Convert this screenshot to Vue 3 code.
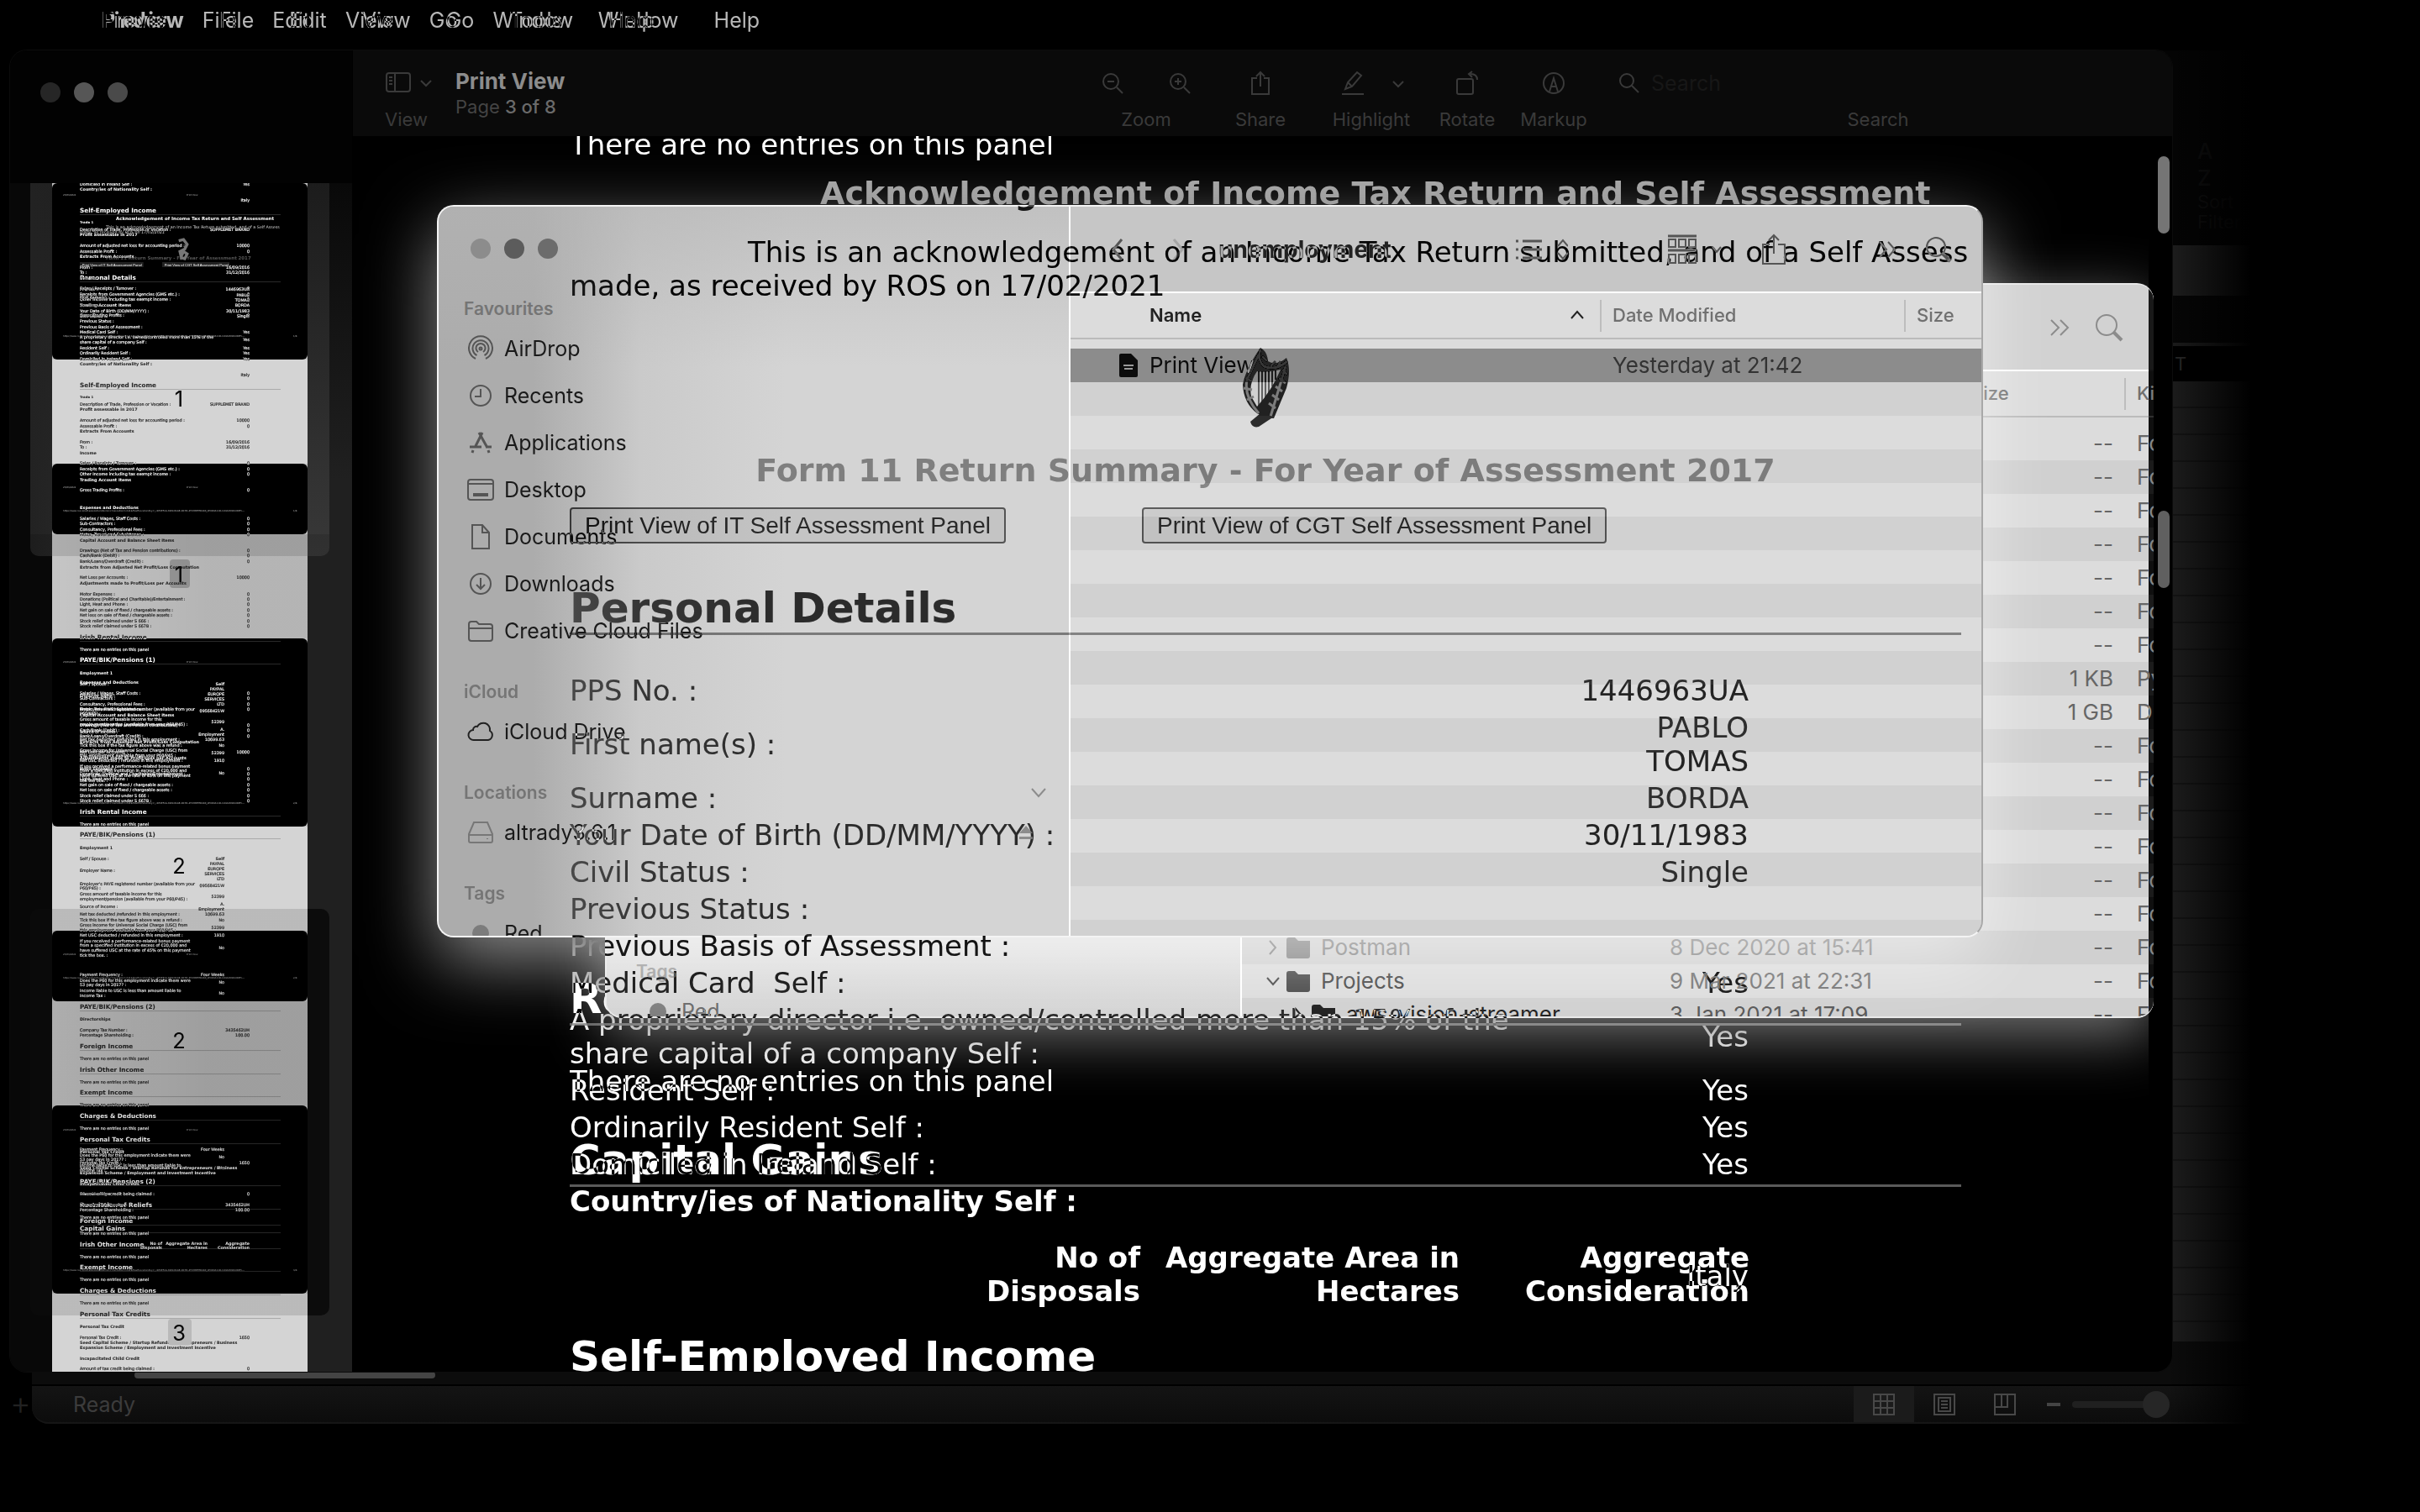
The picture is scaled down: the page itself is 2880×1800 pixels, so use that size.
<script setup>
const menuBack = ['Finder', 'File', 'Edit', 'View', 'Go', 'Window', 'Help']
const menuFront = ['Preview', 'File', 'Edit', 'View', 'Go', 'Tools', 'Window', 'Help']

const favourites = [
  { name: 'AirDrop', icon: 'airdrop' },
  { name: 'Recents', icon: 'clock' },
  { name: 'Applications', icon: 'apps' },
  { name: 'Desktop', icon: 'desktop' },
  { name: 'Documents', icon: 'doc' },
  { name: 'Downloads', icon: 'down' },
  { name: 'Creative Cloud Files', icon: 'folder' },
]

const dash = (n) => Array.from({ length: n }, () => ({ size: '--', kind: 'Folder' }))
const files = [
  ...dash(7),
  { size: '1 KB', kind: 'Python' },
  { size: '1 GB', kind: 'Disk' },
  ...dash(6),
  { name: 'Postman', date: '8 Dec 2020 at 15:41', size: '--', kind: 'Folder', tone: 'faint' },
  { name: 'Projects', date: '9 Mar 2021 at 22:31', size: '--', kind: 'Folder', tone: 'mid', open: true },
  { name: 'aws-vision-streamer', date: '3 Jan 2021 at 17:09', size: '--', kind: 'Folder', tone: 'dark' },
]

const details = [
  ['PPS No. :', '1446963UA'],
  ['First name(s) :', 'PABLO\nTOMAS'],
  ['Surname :', 'BORDA'],
  ['Your Date of Birth (DD/MM/YYYY) :', '30/11/1983'],
  ['Civil Status :', 'Single'],
  ['Previous Status :', ''],
  ['Previous Basis of Assessment :', ''],
  ['Medical Card\u00a0 Self :', 'Yes'],
  ['A proprietary director i.e. owned/controlled more than 15% of the share capital of a company Self :', 'Yes'],
  ['Resident Self :', 'Yes'],
  ['Ordinarily Resident Self :', 'Yes'],
  ['Domiciled in Ireland Self :', 'Yes'],
]

/* Miniature pages: y | style | label | value | value column (right edge) */
const intro = `
331|h|Personal Details|
344||PPS No. :|1446963UA
351|||PABLO
354||First name(s) :|
357|||TOMAS
363||Surname :|BORDA
370||Your Date of Birth (DD/MM/YYYY) :|30/11/1983
376||Civil Status :|Single
382||Previous Status :|
389||Previous Basis of Assessment :|
395||Medical Card  Self :|Yes
401||A proprietary director i.e. owned/controlled more than 15% of the|
404|||Yes
407||share capital of a company Self :|
414||Resident Self :|Yes
420||Ordinarily Resident Self :|Yes`
const income = `
427||Domiciled in Ireland Self :|Yes
433|b|Country/ies of Nationality Self :|
446|||Italy
459|h|Self-Employed Income|
472|s|Trade 1|
481||Description of Trade, Profession or Vocation :|SUPPLEMET BRAND
487|b|Profit assessable in 2017|
500||Amount of adjusted net loss for accounting period :|10000
507||Assessable Profit :|0
513|b|Extracts From Accounts|
526||From :|16/09/2016
532||To :|31/12/2016
539|b|Income|
551||Sales / Receipts / Turnover :|0
558||Receipts from Government Agencies (GMS etc.) :|0
564||Other Income including tax exempt income :|0
571|b|Trading Account Items|
583||Gross Trading Profits :|0`
const expenses = `
604|b|Expenses and Deductions|
617||Salaries / Wages, Staff Costs :|0
623||Sub-Contractors :|0
630||Consultancy, Professional Fees :|0
636||Motor, Travel and Subsistence :|0
643|b|Capital Account and Balance Sheet Items|
655||Drawings (Net of Tax and Pension contributions) :|0
661||Cash/Bank (Debit) :|0
668||Bank/Loans/Overdraft (Credit) :|0
675|b|Extracts from Adjusted Net Profit/Loss Computation|
687||Net Loss per Accounts :|10000
694|b|Adjustments made to Profit/Loss per Accounts|
707||Motor Expenses :|0
713||Donations (Political and Charitable)/Entertainment :|0
719||Light, Heat and Phone :|0
726||Net gain on sale of fixed / chargeable assets :|0
732||Net loss on sale of fixed / chargeable assets :|0
739||Stock relief claimed under S 666 :|0
745||Stock relief claimed under S 667B :|0
759|h|Irish Rental Income|
773||There are no entries on this panel|`
const paye = `
994|h|PAYE/BIK/Pensions (1)|
1009|b|Employment 1|
1022||Self / Spouse :|
1022|b||Self|205
1028|||PAYPAL|205
1034|||EUROPE|205
1036||Employer Name :|
1040|||SERVICES|205
1046|||LTD|205
1052||Employer's PAYE registered number (available from your|
1054|||09568421W|205
1057||P60/P45) :|
1064||Gross amount of taxable income for this|
1067|||52399|205
1070||employment/pension (available from your P60/P45) :|
1076|||A.|205
1079||Source of income :|
1082|||Employment|205
1088||Net tax deducted /refunded in this employment :|10699.63|205
1095||Tick this box if the tax figure above was a refund :|No|205
1101||Gross income for Universal Social Charge (USC) from|
1104|||52399|205
1107||this employment available from your P60/P45 :|
1113||Net USC deducted / refunded in this employment :|1910|205
1120||If you received a performance-related bonus payment|
1125||from a specified institution in excess of €20,000 and|
1128|||No|205
1131||have suffered USC at the rate of 45% on this payment|
1137||tick the box. :|`
const credits = `
1160||Payment Frequency :|Four Weeks|205
1167||Does the P60 for this employment indicate there were|
1169|||No|205
1172||53 pay days in 2017? :|
1179||Income liable to USC is less than amount liable to|
1182|||No|205
1185||Income Tax :|
1199|h|PAYE/BIK/Pensions (2)|
1213|b|Directorships|
1226||Company Tax Number :|3435462UH
1232||Percentage Shareholding :|100.00
1246|h|Foreign Income|
1260||There are no entries on this panel|
1274|h|Irish Other Income|
1288||There are no entries on this panel|
1301|h|Exempt Income|
1315||There are no entries on this panel|
1329|h|Charges & Deductions|
1343||There are no entries on this panel|
1357|h|Personal Tax Credits|
1371|b|Personal Tax Credit|
1384||Personal Tax Credit :|1650
1390|b|Seed Capital Scheme / Startup Refunds for Entrepreneurs / Business|
1396|b|Expansion Scheme / Employment and Investment Incentive|
1409|b|Incapacitated Child Credit|
1421||Amount of tax credit being claimed :|0
1435|h|Restriction of Reliefs|
1449||There are no entries on this panel|
1463|h|Capital Gains|
1480|b||No of|131
1480|b||Aggregate Area in|185
1480|b||Aggregate|
1485|b||Disposals|131
1485|b||Hectares|185
1485|b||Consideration|`

const U = 7
const parse = (src, shift) =>
  src.trim().split('\n').map((l) => {
    const [y, s, label, value, right] = l.split('|')
    return { y: (Number(y) + shift - 216) * U, s: s || 'n', label, value, right: Number(right || 235) * U }
  }).filter((l) => l.y > -14 && l.y < 9900)
const layers = [
  [...parse(intro, 0), ...parse(income, 0), ...parse(expenses, 0), ...parse(paye, 0), ...parse(credits, 0)],
  [...parse(income, -208), ...parse(paye, -208), ...parse(expenses, 208), ...parse(credits, 208)],
]
const headers = [232, 580, 788, 1136, 1345].map((y) => (y - 217) * U)
const footers = [[400, '1/8'], [608, '1/8'], [956, '2/8'], [1164, '2/8'], [1512, '3/8']].map(([y, n]) => ({ y: (y - 217) * U, n }))
const sheets = [
  ['blk', 210], ['pale', 124], ['blk', 84], ['pale grey', 124], ['blk', 224],
  ['pale', 124], ['blk', 84], ['pale grey', 124], ['blk', 224], ['pale', 93],
]
</script>

<template>
  <div class="screen">
    <header class="menubar">
      <nav class="menu" aria-label="Finder menu">
        <a v-for="(m, i) in menuBack" :key="i" href="#" :class="{ app: i === 0 }">{{ m }}</a>
      </nav>
      <nav class="menu over" aria-label="Preview menu">
        <a v-for="(m, i) in menuFront" :key="i" href="#" :class="{ app: i === 0 }">{{ m }}</a>
      </nav>
    </header>

    <section class="sheet" aria-label="Spreadsheet">
      <div class="ribbon"><b>A</b><b>Z</b><span>Sort</span><span>Filter</span></div>
      <div class="formula"></div>
      <div class="colhead">T</div>
      <div class="cells"></div>
      <div class="tabs"><span class="hthumb"></span></div>
      <footer class="status">
        <span class="ready">Ready</span>
        <div class="views">
          <button class="on" aria-label="Normal view"><svg width="28" height="28" viewBox="0 0 28 28"><path d="M2 2h24v24H2zM2 10h24M2 18h24M10 2v24M18 2v24" /></svg></button>
          <button aria-label="Page layout"><svg width="28" height="28" viewBox="0 0 28 28"><path d="M2 2h24v24H2zM7 6h14v16H7zM10 10h8M10 14h8M10 18h8" /></svg></button>
          <button aria-label="Page break"><svg width="28" height="28" viewBox="0 0 28 28"><path d="M2 2h24v24H2zM2 17h15V2M10 2v15" /></svg></button>
        </div>
        <i class="minus"></i><i class="track"><i class="knob"></i></i>
      </footer>
    </section>
    <span class="plus">+</span>

    <main class="preview">
      <aside class="side">
        <div class="lights dim"><i></i><i></i><i></i></div>
        <div class="thumbs">
          <div class="sel"></div>
          <div class="strip">
            <div v-for="(s, i) in sheets" :key="i" :class="s[0]" :style="{ flexGrow: s[1] }"></div>
          </div>
          <svg class="mini" viewBox="0 0 2128 9905" preserveAspectRatio="xMidYMin slice">
            <g v-for="(lines, k) in layers" :key="k" class="pass">
              <template v-for="(l, i) in lines" :key="i">
                <text v-if="l.label" :class="l.s" x="231" :y="l.y">{{ l.label }}</text>
                <text v-if="l.value" :class="l.s" :x="l.right" :y="l.y" text-anchor="end">{{ l.value }}</text>
                <path v-if="l.s === 'h'" class="rule" :d="`M231 ${l.y + 18}H1904`" />
              </template>
            </g>
            <g class="pass">
              <text class="ack" x="532" y="308">Acknowledgement of Income Tax Return and Self Assessment</text>
              <text class="n soft" x="448" y="378">This is an acknowledgement of an Income Tax Return submitted, and of a Self Assess</text>
              <text class="n soft" x="231" y="420">made, as received by ROS on 17/02/2021</text>
              <text class="ack low" x="448" y="637">Form 11 Return Summary - For Year of Assessment 2017</text>
              <rect class="chip" x="231" y="658" width="530" height="42" /><rect class="chip" x="917" y="658" width="560" height="42" />
              <text class="btn" x="250" y="690">Print View of IT Self Assessment Panel</text>
              <text class="btn" x="936" y="690">Print View of CGT Self Assessment Panel</text>
              <path class="tiny" d="M1055 480l40-10 30 40-20 40-40 20 10 40 20-40 30 20-20 40-30-10" />
              <text v-for="y in headers" :key="'d' + y" class="t" x="91" :y="y">25/03/2021</text>
              <text v-for="y in headers" :key="'p' + y" class="t" x="1120" :y="y">Print View</text>
              <template v-for="f in footers" :key="f.y">
                <text class="t" x="91" :y="f.y">https://www.ros.ie/self-assessment/service?execution=e1s1&amp;flowExecutionKey=_c4E9EF2A-3909-B2AB-DC7D-4F25BBFED480_kE9CDA11D-11DA-B09D-DDE5---</text>
                <text class="t" x="2040" :y="f.y" text-anchor="end">{{ f.n }}</text>
              </template>
            </g>
            <rect class="badge" x="980" y="3136" width="168" height="238" rx="28" />
            <rect class="badge light" x="966" y="9464" width="196" height="220" rx="28" />
            <g class="nums" text-anchor="middle">
              <text x="1057" y="1860">1</text><text x="1057" y="3325">1</text><text x="1057" y="5755">2</text>
              <text x="1057" y="7209">2</text><text x="1057" y="9645">3</text>
            </g>
          </svg>
          <div class="strip wash">
            <div v-for="(s, i) in sheets" :key="i" :class="s[0]" :style="{ flexGrow: s[1] }"></div>
          </div>
          <div class="shade first"></div>
          <div class="shade second"></div>
        </div>
      </aside>

      <div class="body">
        <div class="toolbar">
          <div class="viewtool">
            <div class="ico"><svg width="60" height="28" viewBox="0 0 60 28"><rect x="2" y="2" width="28" height="22" rx="3" /><path d="M12 2v22M5 7h4M5 11h4M5 15h4M43 11l6 6 6-6" /></svg></div>
            <span>View</span>
          </div>
          <div class="title"><b>Print View</b><small>Page <em>3 of 8</em></small></div>
          <div class="tool zoom"><div class="ico">
            <svg width="28" height="28" viewBox="0 0 28 28"><circle cx="12" cy="12" r="9" /><path d="M19 19l7 7M8 12h8" /></svg>
            <svg width="28" height="28" viewBox="0 0 28 28"><circle cx="12" cy="12" r="9" /><path d="M19 19l7 7M8 12h8M12 8v8" /></svg></div><span>Zoom</span></div>
          <div class="tool share"><div class="ico"><svg width="28" height="30" viewBox="0 0 28 30"><path d="M10 9H4v19h20V9h-6M14 19V2M9 7l5-5 5 5" /></svg></div><span>Share</span></div>
          <div class="tool high"><div class="ico"><svg width="90" height="30" viewBox="0 0 90 30"><path d="M10 28h26M14 22l3-8L28 2l5 4-11 13-8 3zM17 14l5 5M71 13l6 6 6-6" /></svg></div><span>Highlight</span></div>
          <div class="tool rot"><div class="ico"><svg width="28" height="30" viewBox="0 0 28 30"><rect x="2" y="10" width="19" height="18" rx="2" /><path d="M26 11c0-5-3-7-8-7M20 1l-4 3 4 4" /></svg></div><span>Rotate</span></div>
          <div class="tool mark"><div class="ico"><svg width="28" height="28" viewBox="0 0 28 28"><circle cx="14" cy="14" r="12" /><path d="M9 24l5-16 5 16M11 18h6" /></svg></div><span>Markup</span></div>
          <div class="tool find"><label class="ico"><svg width="28" height="28" viewBox="0 0 28 28"><circle cx="11" cy="11" r="8" /><path d="M17 17l8 8" /></svg><input type="text" placeholder="Search" aria-label="Search" /></label><span>Search</span></div>
        </div>

        <div class="doc">
          <article class="page under">
            <p class="cut">There are no entries on this panel</p>
            <h2 class="reliefs">Restriction of Reliefs</h2>
            <p class="none">There are no entries on this panel</p>
            <h2 class="gains">Capital Gains</h2>
            <div class="thead"><b>No of Disposals</b><b>Aggregate Area in Hectares</b><b>Aggregate Consideration</b></div>
          </article>

          <div class="glow"><div></div></div>

          <section class="finder back">
            <div class="fside">
              <div class="grp">Tags</div>
              <div class="row"><i class="dot"></i>Red</div>
            </div>
            <div class="flist">
              <div class="fbar">
                <svg width="28" height="24" viewBox="0 0 28 24"><path d="M4 3l9 9-9 9M15 3l9 9-9 9" /></svg>
                <svg width="34" height="34" viewBox="0 0 34 34"><circle cx="14" cy="14" r="12" /><path d="M22 22l10 10" stroke-width="4" /></svg>
              </div>
              <table>
                <colgroup><col class="c1" /><col class="c2" /><col class="c3" /><col /></colgroup>
                <thead><tr><th></th><th></th><th>Size</th><th class="kd">Kind</th></tr></thead>
                <tbody>
                  <tr v-for="(f, i) in files" :key="i" :class="f.tone">
                    <td class="nm"><div v-if="f.name" :class="{ deep: f.tone === 'dark' }">
                      <svg width="18" height="20" viewBox="0 0 18 20"><path :d="f.open ? 'M2 6l7 8 7-8' : 'M5 2l7 8-7 8'" /></svg>
                      <svg class="fold" width="28" height="26" viewBox="0 0 28 26"><path d="M0 4q0-3 3-3h7l4 4h14v18q0 3-3 3H3q-3 0-3-3z" /></svg>{{ f.name }}
                    </div></td>
                    <td>{{ f.date }}</td><td class="sz">{{ f.size }}</td><td class="kd">{{ f.kind }}</td>
                  </tr>
                </tbody>
              </table>
            </div>
            <div class="edge"></div>
          </section>

          <section class="finder front">
            <div class="fside">
              <div class="lights"><i></i><i></i><i></i></div>
              <div class="grp">Favourites</div>
              <div v-for="f in favourites" :key="f.name" class="row">
                <svg width="32" height="32" viewBox="0 0 32 32">
                  <g v-if="f.icon === 'airdrop'"><path d="M10 28a14 14 0 1 1 12 0M11.500 24a9.500 9.500 0 1 1 9 0M13 20a5.500 5.500 0 1 1 6 0" /><circle cx="16" cy="16" r="1.500" /></g>
                  <g v-else-if="f.icon === 'clock'"><circle cx="16" cy="16" r="12" /><path d="M16 8v9h-7" /></g>
                  <path v-else-if="f.icon === 'apps'" stroke-width="3" d="M18 4L10 20M14 4l10 18M3 21h14M22 21h7M7 25l-1 3M25 25l1 3" />
                  <g v-else-if="f.icon === 'desktop'"><rect x="1" y="4" width="30" height="24" rx="3" /><path d="M1 9h30" /><path d="M7 22h18" stroke-width="4" /></g>
                  <path v-else-if="f.icon === 'doc'" d="M6 2h12l8 9v19H6zM18 2v9h8" />
                  <g v-else-if="f.icon === 'down'"><circle cx="16" cy="16" r="12" /><path d="M16 9v13M11 17l5 5 5-5" /></g>
                  <path v-else d="M2 8q0-3 3-3h6l3 3h13q3 0 3 3v14q0 3-3 3H5q-3 0-3-3zM2 13h28" />
                </svg>{{ f.name }}
              </div>
              <div class="grp">iCloud</div>
              <div class="row"><svg class="strong" width="32" height="32" viewBox="0 0 32 32"><path d="M8 26a6 6 0 0 1-1-12 4 4 0 0 1 5-4 8 8 0 0 1 15 5 6 6 0 0 1-2 11z" /></svg>iCloud Drive</div>
              <div class="grp">Locations<svg class="tail" width="20" height="14" viewBox="0 0 20 14"><path d="M2 2l8 9 8-9" /></svg></div>
              <div class="row"><svg class="weak" width="32" height="32" viewBox="0 0 32 32"><path d="M8 4h16l6 14v8q0 2-2 2H4q-2 0-2-2v-8zM2 19h28M24 23v1" /></svg>altrady3.6.1<svg class="tail eject" width="18" height="20" viewBox="0 0 18 20"><path d="M9 2l8 9H1zM1 15h16v3H1z" /></svg></div>
              <div class="grp">Tags</div>
              <div class="row"><i class="dot"></i>Red</div>
            </div>
            <div class="flist">
              <div class="fbar">
                <svg width="16" height="28" viewBox="0 0 16 28"><path d="M13 2L3 14l10 12" stroke-width="3" /></svg>
                <svg class="off" width="16" height="28" viewBox="0 0 16 28"><path d="M3 2l10 12L3 26" stroke-width="3" /></svg>
                <b>unemployment</b>
                <svg width="64" height="30" viewBox="0 0 64 30"><path d="M2 5h3M10 5h23M2 15h3M10 15h23M2 25h3M10 25h23" stroke-width="3" /><path d="M52 11l6-7 6 7M52 19l6 7 6-7" /></svg>
                <svg width="68" height="38" viewBox="0 0 68 38"><path d="M1 3h34M1 20h34" stroke-width="3" /><path d="M2 7h8v9H2zM14 7h8v9h-8zM26 7h8v9h-8zM2 25h8v10H2zM14 25h8v10h-8zM26 25h8v10h-8zM54 16l5 6 5-6" /></svg>
                <svg width="30" height="38" viewBox="0 0 30 38"><path d="M10 13H2v23h26V13h-8M15 24V2M9 8l6-6 6 6" /></svg>
                <svg width="24" height="22" viewBox="0 0 24 22"><path d="M3 2l8 9-8 9M13 2l8 9-8 9" /></svg>
                <svg width="34" height="34" viewBox="0 0 34 34"><circle cx="14" cy="14" r="11" /><path d="M22 22l9 9" stroke-width="4" /></svg>
              </div>
              <table>
                <colgroup><col class="c1" /><col class="c2" /><col /></colgroup>
                <thead><tr><th class="nm"><div>Name<svg width="18" height="12" viewBox="0 0 18 12"><path d="M2 10l7-8 7 8" /></svg></div></th><th class="ln">Date Modified</th><th class="ln">Size</th></tr></thead>
                <tbody><tr><td class="nm"><div><svg width="22" height="28" viewBox="0 0 22 28"><path class="ink" d="M0 2q0-2 2-2h12l8 8v18q0 2-2 2H2q-2 0-2-2z" /><path class="lite" d="M5 14h12M6 18h10" /></svg>Print View</div></td><td>Yesterday at 21:42</td><td></td></tr></tbody>
              </table>
              <div class="stripes"></div>
            </div>
          </section>

          <article class="page over">
            <h1>Acknowledgement of Income Tax Return and Self Assessment</h1>
            <p class="intro">This is an acknowledgement of an Income Tax Return submitted, and of a Self Assess<br />made, as received by ROS on 17/02/2021</p>
            <svg class="harp" width="60" height="100" viewBox="0 0 60 100">
              <path class="wire" d="M22 30v44M26 28v42M30 30v34M34 30v28M38 30v20M42 30v12" />
              <path class="wood" d="M24 4q8 4 9 16 10 6 22-4 6 14 0 36L40 88q-10 0-20-6Q4 70 3 48 6 30 24 4zM20 32Q10 46 13 62l7 12q18-20 28-44-16 4-28 2z" />
              <path class="vein" d="M24 6q-4 12 4 20 14 6 28-6M22 12L8 42q-4 20 14 40M26 14l6 6M54 26L36 86M50 30l6 6M46 40l8 6M42 50l8 6M38 60l8 6M34 70l8 6M6 40l8 4M4 52l10 2M8 66l8-4M36 26l6-6M44 28l4-8" />
              <path class="wood" d="M12 92l12-10 16 4-18 12q-8 2-10-6z" />
            </svg>
            <h3>Form 11 Return Summary - For Year of Assessment 2017</h3>
            <div class="buttons"><button>Print View of IT Self Assessment Panel</button><button>Print View of CGT Self Assessment Panel</button></div>
            <h2>Personal Details</h2>
            <table class="details">
              <colgroup><col /><col class="val" /></colgroup>
              <tbody>
                <tr v-for="(d, i) in details" :key="i"><th scope="row">{{ d[0] }}</th><td>{{ d[1] }}</td></tr>
                <tr><th scope="row" class="bold" colspan="2">Country/ies of Nationality Self :</th></tr>
                <tr class="italy"><td colspan="2">Italy</td></tr>
              </tbody>
            </table>
            <h2 class="self">Self-Employed Income</h2>
          </article>

          <i class="scroll upper"></i><i class="scroll lower"></i>
        </div>
      </div>
    </main>
  </div>
</template>

<style>
body { margin: 0; background: #000; }
</style>

<style scoped>
* { box-sizing: border-box; }
.screen { position: relative; min-height: 100vh; overflow: hidden; background: #000; font-family: Inter, "Noto Sans", sans-serif; font-size: 24px; isolation: isolate; }
svg { fill: none; stroke: currentColor; stroke-width: 2; flex: none; }
button { border: 0; background: none; color: inherit; padding: 0; font: inherit; }

.menubar { display: grid; height: 48px; padding-left: 121px; isolation: isolate; }
.menu { grid-area: 1 / 1; display: flex; align-items: center; gap: 42px; font-size: 25px; }
.menu a { color: #b8b8b8; text-decoration: none; }
.menu .app { font-weight: 700; }
.over { mix-blend-mode: difference; }

.sheet { position: absolute; inset: 60px 190px 105px 38px; display: flex; flex-direction: column; color: #333; background: #0b0b0b; border-radius: 0 0 20px 20px; }
.sheet::after { content: ""; position: absolute; inset: 0 0 0 auto; width: 110px; background: linear-gradient(90deg, transparent, #000 90%); }
.ribbon { height: 232px; padding: 104px 0 0 2577px; display: flex; flex-direction: column; color: #101010; background: #040404; font-size: 22px; overflow: hidden; }
.ribbon b { font-size: 26px; font-weight: 500; line-height: 32px; }
.ribbon span { line-height: 24px; }
.formula { height: 120px; background: linear-gradient(#1e1e1e 60px, #060606 60px, #060606 116px, #1c1c1c 116px); }
.colhead { height: 42px; padding-left: 2550px; background: #000; color: #2a2a2a; font-size: 22px; line-height: 42px; }
.cells { flex: 1; background: repeating-linear-gradient(#1d1d1d 0 30px, #141414 30px 32px); }
.tabs { height: 53px; background: #0c0c0c; border-bottom: 2px solid #000; }
.hthumb { display: block; width: 358px; height: 8px; margin: 36px 0 0 122px; border-radius: 4px; background: #444; }
.status { height: 45px; display: flex; align-items: center; padding-right: 122px; background: linear-gradient(#141414, #0c0c0c); border-bottom: 2px solid #161616; border-radius: 0 0 20px 20px; }
.ready { flex: 1; padding-left: 49px; font-size: 25px; color: #3c3c3c; }
.views { display: flex; align-self: stretch; color: #484848; }
.views button { width: 72px; display: grid; place-items: center; }
.views .on { background: #1b1b1b; }
.minus { width: 16px; height: 4px; margin: 0 14px; background: #444; }
.track { position: relative; width: 102px; height: 8px; border-radius: 4px; background: #202020; }
.knob { position: absolute; right: -14px; top: -12px; width: 32px; height: 32px; border-radius: 50%; background: #262626; }
.plus { position: absolute; left: 12px; bottom: 108px; font-size: 38px; line-height: 44px; color: #222; font-weight: 300; }

.preview { position: absolute; inset: 60px 295px 167px 12px; display: flex; border-radius: 20px; overflow: hidden; background: #000; isolation: isolate; box-shadow: 0 0 0 1px #0c0c0c; }
.side { width: 408px; display: flex; flex-direction: column; background: linear-gradient(90deg, #060606, #0a0a0a 90%); border-right: 1px solid #000; }
.lights { display: flex; gap: 16px; }
.lights i { width: 24px; height: 24px; border-radius: 50%; background: #6c6c6c; }
.lights i:first-child { background: #8c8c8c; }
.lights i:nth-child(2) { background: #5c5c5c; }
.dim { padding: 38px 0 96px 36px; background: #020202; }
.dim i { background: #4a4a4a; }
.dim i:first-child { background: #262626; }
.dim i:nth-child(2) { background: #565656; }
.thumbs { position: relative; flex: 1; padding-left: 50px; isolation: isolate; background: linear-gradient(90deg, #080808 20%, transparent 60%), linear-gradient(#090909, #202020 25%); }
.strip { width: 304px; height: 100%; display: flex; flex-direction: column; background: #c0c0c0; position: relative; }
.strip > * { flex-basis: 0; }
.blk { background: #000; border-radius: 6px; }
.pale { background: #d4d4d4; }
.strip.wash { position: absolute; left: 50px; top: 0; background: none; }
.wash > * { background: none; }
.wash .grey { background: linear-gradient(90deg, rgb(0 0 0 / 7%), rgb(0 0 0 / 15%) 60%); }
.sel { position: absolute; left: 24px; top: 0; width: 356px; height: 444px; border-radius: 0 0 10px 10px; background: linear-gradient(90deg, #222, transparent 50%), linear-gradient(#1c1c1c, #383838); }
.shade { position: absolute; left: 24px; width: 356px; background: rgb(0 0 0 / 12%); border-radius: 10px; }
.first { top: 418px; height: 26px; border-radius: 0 0 10px 10px; }
.second { top: 864px; height: 484px; background: linear-gradient(90deg, #0a0a0a 26px, rgb(0 0 0 / 12%) 26px 330px, #0c0c0c 330px); }
.mini { position: absolute; left: 50px; top: 0; width: 304px; height: 100%; isolation: isolate; mix-blend-mode: difference; stroke: none; fill: #fff; font-family: "DejaVu Sans", sans-serif; }
.pass { mix-blend-mode: difference; }
.n { font-size: 34px; stroke: #fff; stroke-width: 1; }
.b { font-size: 34px; font-weight: 700; }
.s { font-size: 27px; font-weight: 700; }
.h { font-size: 51px; font-weight: 700; }
.t { font-size: 19px; fill: #bbb; }
.soft { fill: #ccc; stroke: none; }
.ack { font-size: 38px; font-weight: 700; }
.low { fill: #555; }
.chip { fill: #222; }
.btn { font: 29px "Liberation Sans", sans-serif; }
.tiny { stroke: #777; stroke-width: 24; fill: none; }
.rule { stroke: #333; stroke-width: 6; }
.badge { fill: rgb(90 90 90 / 50%); }
.light { fill: #1b1b1b; }
.nums { font: 178px Inter, sans-serif; fill: #ccc; }

.body { flex: 1; display: flex; flex-direction: column; min-width: 0; }
.toolbar { height: 102px; display: flex; background: #0a0a0a; color: #3a3a3a; font-size: 22px; line-height: 26px; padding-top: 22px; }
.toolbar .ico { height: 47px; padding-bottom: 14px; display: flex; align-items: center; justify-content: center; }
.viewtool { width: 122px; padding-left: 38px; }
.toolbar .viewtool .ico { justify-content: flex-start; }
.toolbar span { display: block; text-align: center; }
.toolbar .viewtool span { text-align: left; }
.title { flex: 1; color: #8c8c8c; font-size: 26px; line-height: 30px; }
.title b { display: block; }
.title small { display: block; font-size: 22px; line-height: 30px; color: #444; }
.title em { font-style: normal; font-weight: 500; color: #6a6a6a; }
.zoom { width: 130px; }
.zoom .ico { gap: 52px; }
.share { width: 142px; }
.high { width: 122px; }
.rot { width: 106px; }
.mark { width: 100px; }
.find { width: 686px; padding-right: 14px; }
.toolbar .find .ico { justify-content: flex-start; padding-left: 26px; gap: 12px; }
.find input { flex: 1; min-width: 0; border: 0; background: none; padding: 0; font: 25px Inter, sans-serif; color: #333; }
.find input::placeholder { color: #171717; opacity: 1; }

.doc { position: relative; flex: 1; overflow: hidden; isolation: isolate; }
.page { position: absolute; inset: 0 236px 0 258px; overflow: hidden; color: #fff; font: 34px/40px "DejaVu Sans", sans-serif; }
.page p, .page h1, .page h2, .page h3 { margin: 0; white-space: nowrap; }
.page h2 { font-size: 50px; line-height: 58px; border-bottom: 3px solid #5a5a5a; margin-right: 15px; }
.page .cut { margin-top: -10px; }
.under { display: flow-root; }
.page .reliefs { margin-top: 968px; }
.page .none { margin-top: 46px; }
.page .gains { margin-top: 45px; }
.thead { display: flex; padding-top: 64px; text-align: right; }
.thead b { width: 380px; }
.thead b:first-child { width: 679px; padding-left: 480px; }
.thead b:last-child { width: 345px; padding-left: 50px; }
.page h1 { margin: 46px 0 0 298px; font-size: 38px; line-height: 44px; color: #aaa; }
.page .intro { margin-top: 28px; text-indent: 212px; color: #ccc; }
.page .harp { display: block; margin: 50px auto 0 798px; stroke: none; }
.wood { fill: #b0b0b0; fill-rule: evenodd; stroke: none; }
.wire { stroke: #707070; stroke-width: 2; fill: none; }
.vein { stroke: #555; stroke-width: 3; fill: none; }
.page h3 { margin-top: 28px; margin-right: 15px; font-size: 38px; line-height: 44px; text-align: center; color: #555; }
.buttons { display: flex; gap: 162px; margin: 22px 0 48px; }
.buttons button { height: 43px; padding: 0 16px; border: 2px solid #808080; border-radius: 4px; background: #101010; color: #aaa; font: 28px/38px "Liberation Sans", sans-serif; white-space: nowrap; }
.details { width: 1403px; margin-top: 42px; border-spacing: 0 4px; table-layout: fixed; }
.details th, .details td { padding: 0; font-weight: 400; text-align: left; }
.details .val { width: 257px; }
.details td { text-align: right; white-space: pre-line; }
.details .bold { font-weight: 700; }
.details .italy td { height: 130px; }
.page .self { margin-top: -2px; }

.glow { position: absolute; inset: 0 28px 0 0; overflow: hidden; }
.glow div { position: absolute; inset: 175px -6px 421px 300px; border-radius: 20px; box-shadow: 0 20px 70px rgb(255 255 255 / 45%); }
.finder { position: absolute; display: flex; border-radius: 20px; border: 2px solid #e8e8e8; overflow: hidden; color: #1a1a1a; }
.front { inset: 82px 225px 517px 100px; background: #d4d4d4; box-shadow: 0 28px 84px rgb(255 255 255 / 54%); border-color: #f4f4f4 #a8a8a8 #f4f4f4 #f4f4f4; }
.back { inset: 175px 22px 421px 300px; background: #d4d4d4; border-right: 0; }
.fside { width: 752px; flex: none; display: flex; flex-direction: column; border-right: 2px solid #fff; }
.front .fside { background: linear-gradient(rgb(180 180 180 / 60%), transparent 22%), linear-gradient(90deg, #acacac 15%, #cacaca 32%, #d4d4d4 55%); }
.front .lights { height: 77px; flex: none; padding: 38px 0 0 38px; }
.grp { flex: none; height: 64px; padding: 26px 26px 0 30px; display: flex; align-items: center; line-height: 38px; font-size: 21px; font-weight: 600; color: #757575; }
.row { flex: none; height: 56px; padding-left: 34px; padding-right: 42px; display: flex; align-items: center; gap: 12px; font-size: 25px; }
.row svg { color: #555; }
.row .strong { color: #222; }
.row .weak { color: #777; }
.dot { width: 20px; height: 20px; margin: 0 6px; border-radius: 50%; background: #7c7c7c; }
.tail { margin-left: auto; color: #8c8c8c; }
.row .eject { fill: #8c8c8c; stroke: none; }
.flist { flex: 1; min-width: 0; background: #dcdcdc; }
.fbar { height: 103px; display: flex; align-items: center; background: #c6c6c6; border-bottom: 2px solid #fff; color: #555; padding: 0 34px 0 48px; }
.fbar .off { color: #a5a5a5; margin: 0 40px 0 56px; }
.fbar b { flex: 1; font-size: 28px; color: #222; }
.fbar b + svg { margin-right: 118px; }
.fbar b + svg + svg { margin-right: 44px; }
.fbar b + svg + svg + svg { margin-right: 108px; }
.fbar b + svg + svg + svg + svg { margin-right: 32px; }
.flist table { width: 100%; border-collapse: collapse; table-layout: fixed; }
.flist th { height: 54px; padding: 0 0 2px 15px; text-align: left; font-size: 22px; font-weight: 500; color: #707070; border-bottom: 2px solid #bbb; }
.flist td { height: 40px; padding: 0 0 0 15px; white-space: nowrap; overflow: hidden; line-height: 30px; font-size: 26px; }
.front .c1 { width: 630px; }
.front .c2 { width: 362px; }
.front th.nm { color: #222; font-weight: 600; padding: 0 18px 2px 94px; }
.front th.nm div { display: flex; justify-content: space-between; align-items: center; }
.ln { background: linear-gradient(#bdbdbd, #bdbdbd) 0 8px / 2px 38px no-repeat; }
.front tbody td { background: #8c8c8c; color: #333; }
.front tbody .nm { padding-left: 58px; color: #0c0c0c; }
.front tbody .nm div { display: flex; align-items: center; gap: 14px; }
.flist tbody::before { content: ""; display: block; height: 11px; }
.ink { fill: #0c0c0c; stroke: none; }
.lite { stroke: #999; }
.stripes { height: 700px; background: repeating-linear-gradient(#d1d1d1 0 40px, #dcdcdc 40px 80px); }

.back .fside { background: linear-gradient(#e0e0e0 88%, #d0d0d0); justify-content: flex-end; height: 893px; width: 756px; }
.back .grp { color: #999; padding-left: 35px; }
.back .row { color: #666; padding-left: 45px; }
.back .fbar { justify-content: flex-end; background: #d2d2d2; color: #8c8c8c; gap: 28px; padding-right: 36px; }
.back .c1 { width: 494px; }
.back .c2 { width: 359px; }
.back .c3 { width: 197px; }
.back th.kd { background: linear-gradient(#bdbdbd, #bdbdbd) 0 8px / 2px 38px no-repeat; }
.back tbody tr:nth-child(even) { background: #d0d0d0; }
.back td { color: #666; }
.back .sz { text-align: right; padding-right: 13px; }
.back .faint td { color: #808080; }
.back .mid td { color: #707070; }
.back .mid .nm { color: #444; }
.back .dark td { color: #555; }
.back .dark .nm { color: #1c1c1c; }
.back .faint .sz, .back .mid .sz, .back .faint .kd, .back .mid .kd { color: #666; }
.nm div { display: flex; align-items: center; }
.back .nm div { padding-left: 13px; }
.back .nm .deep { padding-left: 43px; }
.fold { margin: 0 13px 0 7px; fill: currentColor; stroke: none; }
.edge { position: absolute; right: 0; top: -2px; bottom: -2px; width: 6px; background: #ebebeb; mix-blend-mode: difference; }
.scroll { position: absolute; right: 3px; width: 14px; height: 92px; border-radius: 7px; background: #757575; }
.upper { top: 24px; }
.lower { top: 446px; background: #606060; }
</style>
